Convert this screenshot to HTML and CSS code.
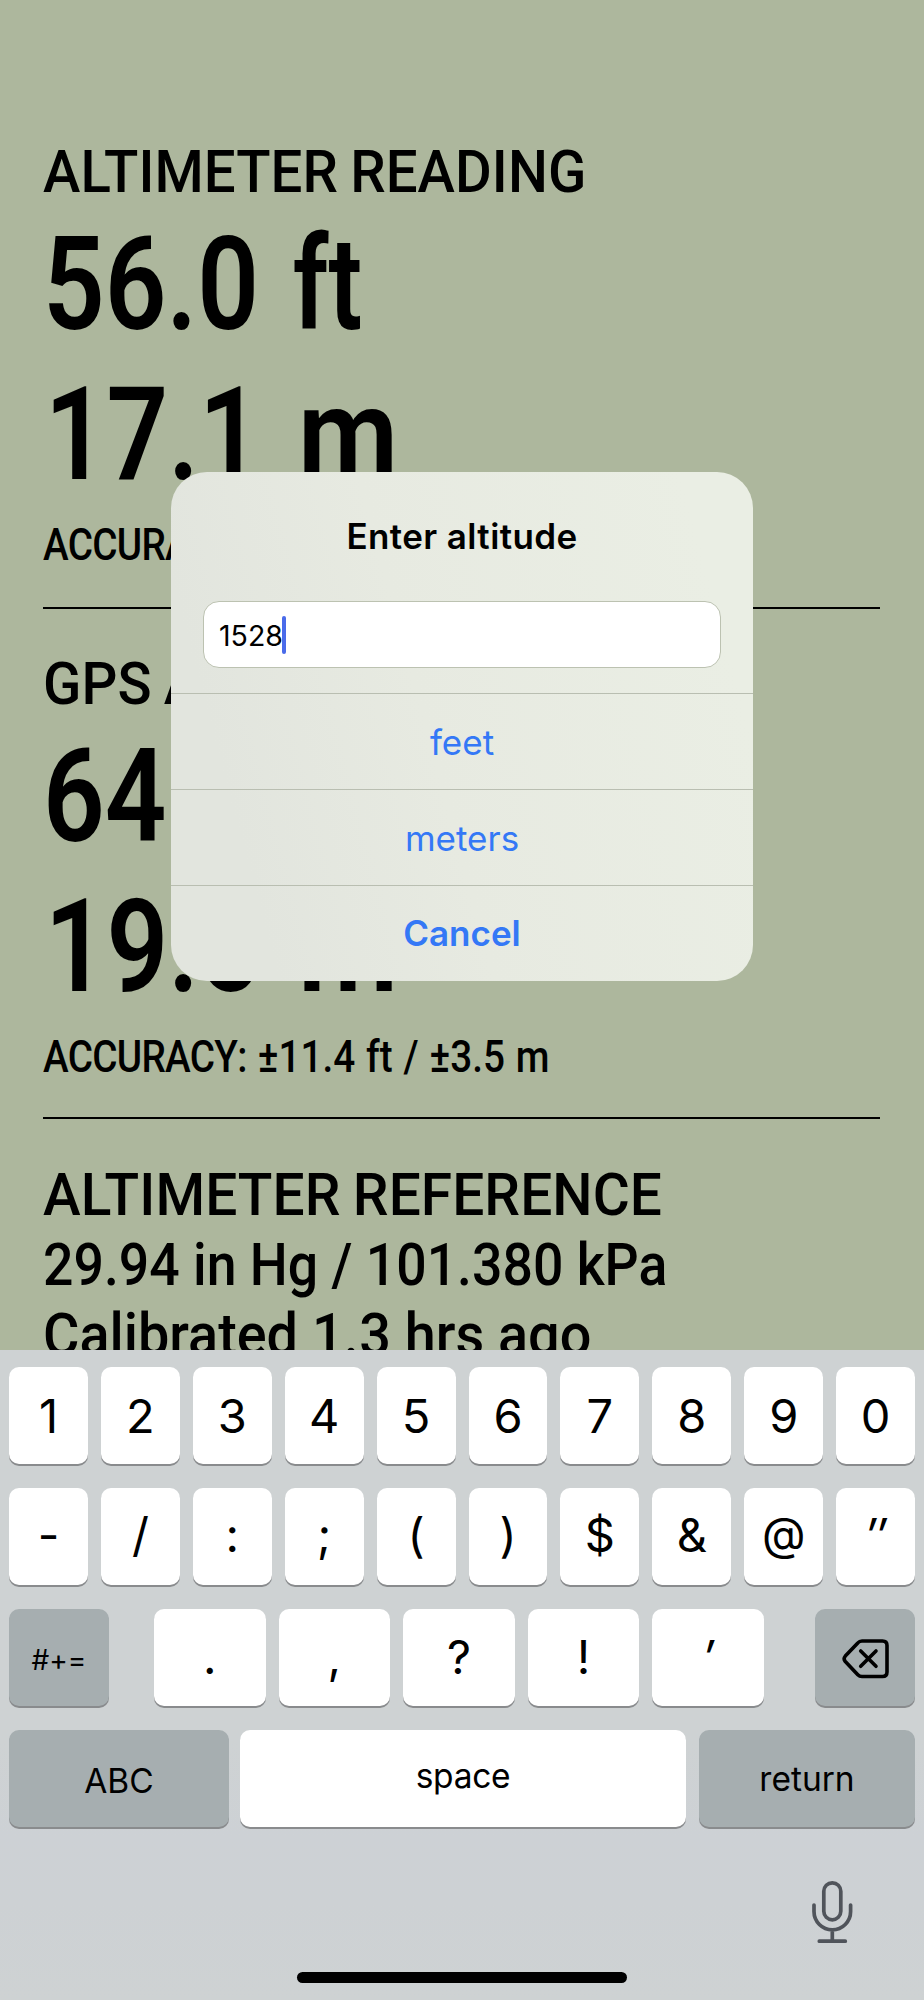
FILE: index.html
```
<!DOCTYPE html>
<html lang="en">
<head>
<meta charset="utf-8">
<title>Altimeter</title>
<link rel="stylesheet" href="styles.css">
</head>
<body>
<div class="screen">
  <main class="readings">
    <section class="section">
      <h2 class="heading w-reading">ALTIMETER READING</h2>
      <p class="big">56.0 <span class="unit-ft">ft</span></p>
      <p class="big metric">17.1 <span class="unit-m">m</span></p>
      <p class="accuracy"><span class="label">ACCURACY:</span> ±11.4 ft / ±3.5 m</p>
    </section>
    <section class="section gps">
      <h2 class="heading w-gps">GPS ALTITUDE</h2>
      <p class="big">64.0 <span class="unit-ft">ft</span></p>
      <p class="big metric">19.5 <span class="unit-m">m</span></p>
      <p class="accuracy"><span class="label">ACCURACY:</span> ±11.4 ft / ±3.5 m</p>
    </section>
    <section class="section last">
      <h2 class="heading w-reference">ALTIMETER REFERENCE</h2>
      <p class="line w-pressure">29.94 in Hg / 101.380 kPa</p>
      <p class="line w-calibrated">Calibrated 1.3 hrs ago</p>
    </section>
  </main>

  <div class="dialog">
    <div class="dialog-head">
      <h1 class="dialog-title">Enter altitude</h1>
      <div class="field"><span class="value">1528</span><span class="caret"></span></div>
    </div>
    <div class="action"><span>feet</span></div>
    <div class="action"><span>meters</span></div>
    <div class="action cancel"><span>Cancel</span></div>
  </div>

  <div class="keyboard">
    <div class="row">
      <div class="key">1</div><div class="key">2</div><div class="key">3</div><div class="key">4</div><div class="key">5</div><div class="key">6</div><div class="key">7</div><div class="key">8</div><div class="key">9</div><div class="key">0</div>
    </div>
    <div class="row symbols">
      <div class="key">-</div><div class="key">/</div><div class="key">:</div><div class="key">;</div><div class="key">(</div><div class="key">)</div><div class="key">$</div><div class="key">&amp;</div><div class="key at">@</div><div class="key prime">″</div>
    </div>
    <div class="row row-punct">
      <div class="key dark small-key more">#+=</div>
      <div class="punct">
        <div class="key">.</div><div class="key">,</div><div class="key">?</div><div class="key">!</div><div class="key prime">′</div>
      </div>
      <div class="key dark small-key">
        <svg class="delete" width="48" height="42" viewBox="0 0 48 42" fill="none" stroke="#000" stroke-width="3.6" stroke-linecap="round" stroke-linejoin="round">
          <path d="M20 2H40.500Q45 2 45 6.500V33Q45 37.500 40.500 37.500H20Q17.500 37.500 15.800 35.700L3.300 22.500Q1 19.800 3.300 17.100L15.800 3.900Q17.500 2 20 2"/>
          <path d="M18.700 12L34 27.300M34 12L18.700 27.300"/>
        </svg>
      </div>
    </div>
    <div class="row row-bottom">
      <div class="key dark abc">ABC</div>
      <div class="key space">space</div>
      <div class="key dark return">return</div>
    </div>
    <div class="tools">
      <svg class="mic" width="44" height="64" viewBox="0 0 44 64" fill="none" stroke="#50545b" stroke-width="3.700" stroke-linecap="round">
        <rect x="13.800" y="2.800" width="17" height="37" rx="8.500"/>
        <path d="M4 25v6.500a18.300 18.300 0 0 0 36.600 0V25M22.300 50v11M9.300 61.200h26"/>
      </svg>
    </div>
    <div class="home"></div>
  </div>
</div>
</body>
</html>
```
FILE: styles.css
```
* { box-sizing: border-box; }
body { margin: 0; }
h1, h2, p { margin: 0; }

.screen {
  position: relative;
  width: 924px;
  height: 2000px;
  overflow: hidden;
  background: #adb79d;
  color: #000;
  display: flex;
  flex-direction: column;
}

.readings {
  height: 1350px;
  flex: none;
  padding: 137px 44px 0 43px;
  overflow: hidden;
  font-family: Roboto, "Liberation Sans", sans-serif;
  font-weight: 500;
  white-space: nowrap;
}
.section { border-bottom: 2px solid #000; padding-bottom: 36px; margin-bottom: 40px; }
.gps { padding-bottom: 34px; margin-bottom: 41px; }
.last { border: 0; }
.heading, .line { font-size: 60px; line-height: 70px; font-weight: 500; transform-origin: 0 50%; }
.heading { margin-bottom: 3px; letter-spacing: .1px; word-spacing: -2px; }
.last .heading { margin-bottom: 0; }
.big { font-size: 129.5px; line-height: 150px; font-weight: 600; word-spacing: 8px; transform: scaleX(.835); transform-origin: 0 50%; }
.metric { text-indent: 2px; word-spacing: 12px; }
.unit-ft { display: inline-block; transform: scaleX(.93); transform-origin: 0 50%; }
.unit-m { display: inline-block; text-indent: 0; transform: scaleX(1.07); transform-origin: 0 50%; }
.accuracy { font-size: 43.5px; line-height: 50px; margin-top: 11px; word-spacing: 1.4px; transform: scaleX(.89); transform-origin: 0 50%; }
.label { letter-spacing: -.8px; }
.w-reading, .w-gps { transform: scaleX(.938); }
.w-reference { transform: scaleX(.946); }
.w-pressure { transform: scaleX(.893); }
.w-calibrated { transform: scaleX(.93); }

.dialog {
  position: absolute;
  left: 171px;
  top: 472px;
  width: 582px;
  height: 509px;
  border-radius: 36px;
  overflow: hidden;
  background: linear-gradient(75deg, #e2e5de 15%, #e7eae1 45%, #eaeee4 90%);
  font-family: Inter, "Liberation Sans", sans-serif;
}
.dialog-head { height: 221px; padding: 43px 32px 0; }
.dialog-title { font-size: 35px; line-height: 42px; font-weight: 600; text-align: center; letter-spacing: .4px; }
.field {
  display: flex;
  align-items: center;
  height: 67px;
  margin-top: 44px;
  padding: 2px 0 0 15px;
  background: #fff;
  border: 1px solid #bcc2b1;
  border-radius: 16px;
}
.value { font-size: 28.5px; }
.caret { width: 4px; height: 38px; margin: -2px 0 0 -1px; border-radius: 2px; background: #4a6bea; }
.action {
  height: 96px;
  border-top: 1px solid #b9beb1;
  font-size: 35px;
  line-height: 96px;
  text-align: center;
  color: #3478f6;
}
.cancel { font-weight: 600; line-height: 95px; }

.keyboard {
  flex: 1;
  background: linear-gradient(#ced2d3 0, #ced2d3 60%, #cdd1d5 75%, #cdd1d4 85%, #ced2d3 100%);
  padding: 17px 9px 0;
  font-family: Inter, "Liberation Sans", sans-serif;
  display: flex;
  flex-direction: column;
}
.row { display: flex; gap: 13px; height: 97px; margin-bottom: 24px; flex: none; }
.key {
  flex: 1 1 0;
  display: flex;
  align-items: center;
  justify-content: center;
  background: #fff;
  border-radius: 10px;
  box-shadow: 0 2px 0 #898b8d;
  font-size: 47px;
}
.symbols .key { padding-bottom: 4px; }
.punct .key { padding-bottom: 3px; }
.key.at { font-size: 45px; padding-bottom: 6px; }
.key.prime { font-style: italic; }
.dark { background: #a6aeb0; }
.row-punct { justify-content: space-between; gap: 0; }
.small-key { flex: 0 0 100px; }
.more { font-size: 28px; padding-top: 4px; }
.delete { margin: 4px 0 0 1px; }
.punct { display: flex; gap: 13px; width: 610px; margin-right: 6px; }
.row-bottom { gap: 0; margin-bottom: 0; }
.row-bottom .key { font-size: 33.5px; }
.row-bottom .abc { flex: 0 0 220px; margin-right: 11px; padding-top: 4px; }
.space { padding-bottom: 6px; letter-spacing: -.3px; }
.row-bottom .return { flex: 0 0 216px; margin-left: 13px; }
.tools { display: flex; justify-content: flex-end; padding: 53px 61px 0 0; }
.mic { display: block; }
.home { width: 330px; height: 11px; border-radius: 6px; background: #000; margin: 28px auto 0; }
```
